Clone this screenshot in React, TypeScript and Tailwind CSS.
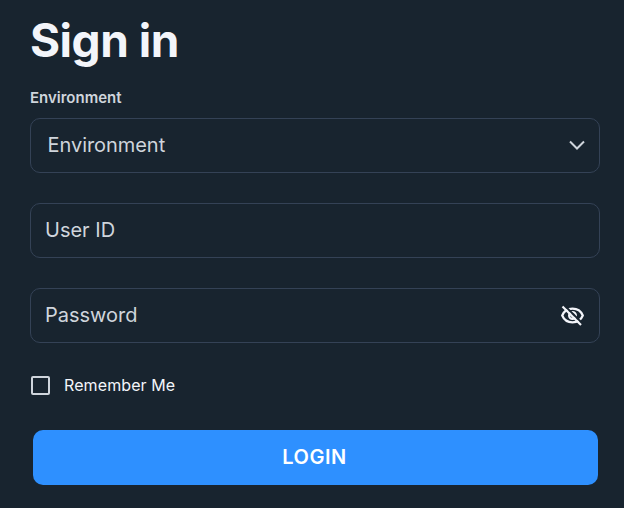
import { useState } from "react";

function EyeOffIcon() {
  return (
    <svg viewBox="0 0 24 24" className="block size-6" fill="none" stroke="currentColor" strokeWidth="2.2">
      <path d="M2.200 11.500C4 7.200 7.800 4.700 12.500 4.700s8.500 2.500 10.300 6.800c-1.800 4.300-5.600 6.800-10.300 6.800S4 15.800 2.200 11.500Z" />
      <circle cx="12.500" cy="11.500" r="3.400" />
      <path stroke="#18242f" strokeWidth="2" d="M4.500 1.500 23 20" />
      <path d="M2.500 2.500 21 21" />
    </svg>
  );
}

export default function App() {
  const [hidden, setHidden] = useState(true);

  return (
    <main className="h-[508px] w-[624px] overflow-hidden bg-[#18242f] pl-[30px] pr-6 font-['Inter',sans-serif] text-[#f3f5fa]">
      <h1 className="pt-3 text-[46px] leading-[56px] font-bold tracking-[-0.5px]">Sign in</h1>
      <label className="mt-5 block text-[15px] leading-5 font-semibold text-[#cfd5dc]">Environment</label>
      <form className="mt-[10px]" onSubmit={(e) => e.preventDefault()}>
        <button
          type="button"
          className="flex h-[55px] w-full items-center justify-between rounded-[10px] border border-[#344256] pr-[14.5px] pl-[16.5px] text-xl text-[#cfd5dc]"
        >
          <span className="pb-0.5 tracking-[-0.05px]">Environment</span>
          <svg viewBox="0 0 16 10" className="mb-0.5 h-[10px] w-4" fill="none" stroke="currentColor" strokeWidth="2">
            <path d="m1 1.500 7 7 7-7" />
          </svg>
        </button>
        <input
          placeholder="User ID"
          className="mt-[30px] block h-[55px] w-full rounded-[10px] border border-[#344256] px-[14px] pb-0.5 text-xl outline-none placeholder:text-[#cfd5dc]"
        />
        <div className="mt-[30px] flex h-[55px] items-center rounded-[10px] border border-[#344256] pr-[15px] pl-[14px]">
          <input
            type={hidden ? "password" : "text"}
            placeholder="Password"
            className="min-w-0 flex-1 pb-0.5 text-xl outline-none placeholder:text-[#cfd5dc]"
          />
          <button type="button" aria-label="Toggle password" onClick={() => setHidden(!hidden)}>
            <EyeOffIcon />
          </button>
        </div>
        <label className="mt-8 flex h-5 items-center gap-[14px] pl-px text-base tracking-[0.1px]">
          <input type="checkbox" className="size-[19px] appearance-none rounded-[2px] border-2 border-[#cfd5dc] checked:bg-[#2e90ff]" />
          Remember Me
        </label>
        <button className="mt-[35px] ml-[3px] h-[55px] w-[565px] rounded-[10px] bg-[#2e90ff] pr-0.5 pb-0.5 text-xl font-semibold tracking-[0.5px] text-white">
          LOGIN
        </button>
      </form>
    </main>
  );
}
